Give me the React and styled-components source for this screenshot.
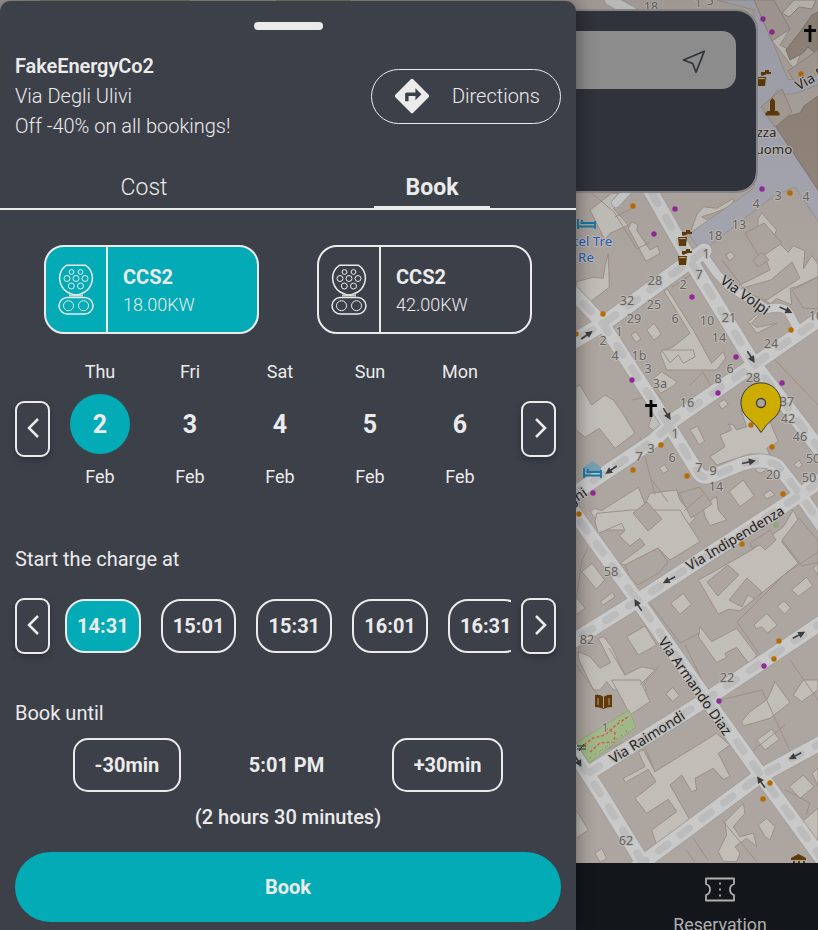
import React from 'react';
import styled, { createGlobalStyle } from 'styled-components';

const Global = createGlobalStyle`
  * { box-sizing: border-box; }
  html, body { margin: 0; padding: 0; overflow: hidden; background: #13171b; }
  button { font: inherit; color: inherit; background: none; border: 0; padding: 0; margin: 0; }
`;

const ink = '#ebebeb';
const teal = '#02abb5';

/* Every layer shares the single grid cell and is stacked in source order. */
const Page = styled.div`
  display: grid;
  grid-template: 930px / 818px;
  width: 818px;
  height: 930px;
  overflow: hidden;
  font-family: Roboto, 'Liberation Sans', sans-serif;
  color: ${ink};
  > * { grid-area: 1 / 1; }
`;

const MapCanvas = styled.svg`
  display: block;
  width: 818px;
  height: 863px;
`;

const SearchCard = styled.header`
  width: 696px;
  height: 184px;
  margin: 9px 0 0 62px;
  padding: 20px 20px;
  background: #30333b;
  background-clip: padding-box;
  border: 2px solid #858585;
  border-radius: 21px;
`;

const SearchField = styled.div`
  display: flex;
  align-items: center;
  justify-content: flex-end;
  height: 58px;
  padding-right: 30px;
  border-radius: 14px;
  background: #8c8c8c;
`;

const BottomNav = styled.nav`
  align-self: end;
  display: flex;
  justify-content: flex-end;
  height: 67px;
  background: #13171b;
`;

const NavItem = styled.div`
  display: flex;
  flex-direction: column;
  align-items: center;
  width: 196px;
  padding-top: 14px;
  font-size: 17.8px;
  line-height: 22px;
  color: #b0b0b0;
  white-space: nowrap;
  svg { margin-bottom: 12px; flex: none; }
`;

const Sheet = styled.main`
  display: flex;
  flex-direction: column;
  width: 576px;
  height: 929px;
  margin-top: 1px;
  background: #3c4049;
  border-radius: 10px 10px 0 0;
  box-shadow: 0 0 20px rgba(0, 0, 0, 0.45);
`;

const Handle = styled.div`
  flex: none;
  align-self: center;
  width: 69px;
  height: 8px;
  margin: 21px 0 0 1px;
  border-radius: 4px;
  background: ${ink};
`;

const Header = styled.section`
  display: flex;
  align-items: center;
  justify-content: space-between;
  height: 90px;
  margin-top: 21px;
  padding: 0 15px;
`;

const Station = styled.div`
  font-size: 20px;
  line-height: 30px;
  font-weight: 300;
`;

const StationName = styled.div`
  font-weight: 600;
  letter-spacing: -0.08px;
`;

const DirectionsButton = styled.button`
  display: flex;
  align-items: center;
  justify-content: space-between;
  width: 190px;
  height: 55px;
  padding: 0 20px 0 22px;
  border: 1px solid ${ink};
  border-radius: 28px;
  font-size: 20px;
  font-weight: 300;
`;

const Tabs = styled.div`
  display: grid;
  grid-template-columns: 1fr 1fr;
  justify-items: center;
  height: 43px;
  margin-top: 26px;
  border-bottom: 2px solid ${ink};
`;

const Tab = styled.button`
  width: 116px;
  height: 41px;
  padding-top: 3px;
  font-size: 23px;
  line-height: 36px;
  font-weight: ${(p) => (p.$active ? 700 : 300)};
  border-bottom: 2px solid ${(p) => (p.$active ? ink : 'transparent')};
`;

const Sockets = styled.div`
  display: flex;
  justify-content: space-around;
  padding: 0 15px;
  margin-top: 35px;
`;

const SocketCard = styled.button`
  display: flex;
  width: 215px;
  height: 89px;
  overflow: hidden;
  text-align: left;
  border: 2px solid ${ink};
  border-radius: 20px;
  background: ${(p) => (p.$active ? teal : 'transparent')};
`;

const SocketIcon = styled.span`
  display: flex;
  align-items: center;
  justify-content: center;
  width: 62px;
  height: 100%;
  border-right: 2px solid ${ink};
`;

const SocketText = styled.span`
  display: flex;
  flex-direction: column;
  padding: 16px 0 0 15px;
  font-size: 18px;
  line-height: 26px;
  font-weight: 300;
`;

const SocketName = styled.span`
  font-size: 20px;
  line-height: 29px;
  font-weight: 700;
`;

const Carousel = styled.div`
  display: grid;
  grid-template-columns: 35px 15px 446px 10px 35px;
  align-items: center;
  height: ${(p) => p.$height}px;
  margin: ${(p) => p.$top}px 20px 0 15px;
  > :nth-child(2) { grid-column: 3; }
  > :nth-child(3) { grid-column: 5; }
`;

const ArrowButton = styled.button`
  display: flex;
  align-items: center;
  justify-content: center;
  width: 35px;
  height: 56px;
  margin-top: ${(p) => p.$drop || 0}px;
  padding-bottom: 3px;
  padding-left: ${(p) => (p.$next ? 5 : 0)}px;
  border: 2px solid ${ink};
  border-radius: 9px;
  box-shadow: 0 3px 6px rgba(0, 0, 0, 0.25);
`;

const DayList = styled.div`
  display: flex;
  gap: 30px;
  padding-left: 5px;
  overflow: hidden;
`;

const Day = styled.div`
  flex: none;
  display: flex;
  flex-direction: column;
  align-items: center;
  width: 60px;
  font-size: 18px;
  line-height: 22px;
`;

const DayNumber = styled.div`
  display: flex;
  align-items: center;
  justify-content: center;
  width: 60px;
  height: 60px;
  margin: 11px 0 12px;
  padding-top: 1px;
  border-radius: 50%;
  font-size: 25px;
  font-weight: 700;
  background: ${(p) => (p.$active ? teal : 'transparent')};
`;

const TimeList = styled.div`
  display: flex;
  gap: 20px;
  overflow: hidden;
`;

const TimeButton = styled.button`
  flex: none;
  height: 54px;
  padding: 0 10.1px;
  font-size: 20px;
  font-weight: 700;
  border: 2px solid ${ink};
  border-radius: 20px;
  background: ${(p) => (p.$active ? teal : 'transparent')};
`;

const Label = styled.h2`
  margin: ${(p) => p.$top}px 15px 0;
  font-size: 20px;
  line-height: 24px;
  font-weight: 400;
`;

const UntilRow = styled.div`
  display: flex;
  align-items: center;
  justify-content: center;
  gap: 68px;
  height: 54px;
  margin-top: 13px;
  font-size: 20px;
  font-weight: 700;
`;

const StepButton = styled.button`
  height: 54px;
  padding: 0 19.5px;
  font-size: 20px;
  font-weight: 700;
  border: 2px solid ${ink};
  border-radius: 15px;
`;

const Duration = styled.div`
  margin-top: 13px;
  font-size: 20px;
  line-height: 24px;
  font-weight: 500;
  text-align: center;
`;

const BookButton = styled.button`
  flex: none;
  height: 70px;
  margin: 23px 15px 0;
  border-radius: 35px;
  background: ${teal};
  font-size: 20px;
  font-weight: 700;
`;

const Chevron = ({ next }) => (
  <svg width="12" height="20" viewBox="0 0 12 20" fill="none" stroke={ink} strokeWidth="2.5">
    <path d={next ? 'M1 1 10 10 1 19' : 'M11 1 2 10 11 19'} />
  </svg>
);

const DirectionsIcon = () => (
  <svg width="36" height="36" viewBox="1.5 1.5 21 21" fill={ink}>
    <path d="M21.71 11.29l-9-9a.996.996 0 0 0-1.41 0l-9 9a.996.996 0 0 0 0 1.41l9 9c.39.39 1.02.39 1.41 0l9-9a.996.996 0 0 0 0-1.41zM14 14.5V12h-4v3H8v-4c0-.55.45-1 1-1h5V7.5l3.5 3.5-3.5 3.5z" />
  </svg>
);

const Ccs2Icon = () => (
  <svg width="36" height="51" viewBox="0 0 36 51" fill="none" stroke={ink}>
    <path strokeWidth="1.5" d="M8.5 1.2h19l3 2.5a16.3 16.3 0 0 1-7.5 26q-5 2.500-10 0a16.300 16.300 0 0 1-7.500-26Z" />
    <path strokeWidth="1.8" strokeOpacity=".8" d="M11 31.5h14" />
    <rect x="1" y="33.5" width="34" height="16.5" rx="8.25" strokeWidth="1.5" />
    {[[13.5, 8], [22.5, 8], [9, 14.5], [18, 14.5], [27, 14.5], [13.3, 22], [22.5, 22]].map(([x, y], i) => (
      <circle key={i} cx={x} cy={y} r={i < 2 ? 2.4 : 3} strokeWidth="1" />
    ))}
    <circle cx="10.5" cy="41.7" r="5" strokeWidth="1" />
    <circle cx="25.5" cy="41.7" r="5" strokeWidth="1" />
  </svg>
);

const LocateIcon = () => (
  <svg width="24" height="28" viewBox="0 -2 24 28" fill="none" stroke="#30333b" strokeWidth="1.7" strokeLinejoin="round">
    <path d="M22.3 3.2 1.500 12l9.200 3.500 3.300 8.800Z" />
  </svg>
);

const TicketIcon = () => (
  <svg width="30" height="25" viewBox="0 0 30 25" fill="none" stroke="#b0b0b0" strokeWidth="1.8" strokeLinejoin="round">
    <path d="M1 1.5h28v5.500q-4 1.200-4 5.500t4 5.500v5.500H1V18q4-1.200 4-5.500T1 7Z" />
    <path d="M15 5.500v2m0 4v2m0 4v2" />
  </svg>
);

/* ---- Map data ---- */

const roads = [
  ['M640 170 650 190 690 260 752 361 820 450', 14],
  ['M560 349 603 324 704 251', 15],
  ['M565 284 603 324 668 424', 13],
  ['M668 424 699 474Q704 480 715 475L742 464Q764 457 778 466L799 493 830 537', 13],
  ['M668 424 752 366 830 312', 14],
  ['M668 427 653 441 560 503', 14],
  ['M565 500 637 600 705 697 760 774 830 870', 14],
  ['M560 649 637 601 797 497 830 474', 14],
  ['M590 772 704 701 830 617', 14],
  ['M565 739 600 793 646 868', 14],
  ['M637 867 760 776 830 738', 14],
  ['M702 253 717 274 731 288 767 309Q784 305 789 313L797 328', 8],
  ['M610 0 632 12', 10],
  ['M616 203 628 190', 8],
];

/* Open ground between buildings, grouped by map tile. */
const yards = [
  { at: 'translate(570 190) scale(.3333)', shapes: [
    'M60 60 125 10 180 10 130 55 175 105 120 130 105 150 90 120Z',
    'M115 190 118 292 55 340 20 300 20 275 70 262 100 265 105 230Z',
    'M175 115 185 95 205 105 200 120 240 180 262 168 270 190 228 214Z',
    'M380 75 400 50 440 55 490 25 490 45 430 70 395 80 420 95 395 110 360 130Z',
    'M565 85 575 68 620 120 610 142 655 187 670 167 705 182 700 237 725 197 744 222V260L680 290 660 295 665 345 620 325 575 365 545 400 560 412 620 400 560 430 535 395 600 340 500 290 600 240 560 140Z',
    'M468 195l15-10 12 15-18 12Z',
    'M183 435l15-10 15 22-15 10Z', 'M230 420l22-20 22 32-22 18Z',
    'M282 303 292 297 372 424 425 520 460 485 467 505 440 540H290L270 488 310 470 360 430Z',
  ] },
  { at: 'translate(570 350) scale(.3333)', shapes: [
    'M18 110 30 105 65 165 105 135 130 150 155 185 195 250 135 295 88 235 45 262 18 240Z',
    'M245 90 275 65 320 95 315 105 272 130Z', 'M235 230l15-45 35 45-30 15Z',
    'M275 0 370 0 375 20 340 40 325 15 300 38Z',
    'M360 240l22-12 22 45-17 12-15-27Z', 'M445 160l18-12 12 15-20 15Z',
    'M450 255 485 240 475 222 490 225 500 240 530 230 512 180 550 215 600 215 625 275 590 295 600 315 540 312 440 345 420 320 465 290Z',
    'M268 355l15-12 12 18-15 10Z',
    'M60 485 75 475 95 482 205 412 225 462 240 430 320 420 330 450 375 505 340 540H105Z',
    'M400 478 430 445 440 440 445 480 470 510 420 527 405 500Z', 'M478 425 520 390 553 438 510 470Z',
    'M580 435l20-15 15 15-25 12Z', 'M672 345l15-15 10 15-12 10Z', 'M555 360 570 345 590 360 570 370Z',
  ] },
  { at: 'translate(570 510) scale(.3333)', shapes: [
    'M75 35 80 10 185 0H330L345 25 390 95 300 150 265 115 165 165 150 160 225 105 210 85 180 108 148 78 165 62 155 40 85 70Z',
    'M36 185l30-25 38 50-25 28Z', 'M92 275l35-28 8 14-38 25Z',
    'M302 280l38-30 24 33-34 30Z',
    'M385 210 440 180 545 120 640 50 670 0 690 42 635 95 685 160 510 302 475 298 445 312Z',
    'M552 345 590 310 622 345 592 370 575 350 560 357Z', 'M622 290l20-18 20 22-18 18Z',
    'M665 240l45-38 18 25-42 32Z', 'M672 110l23-20 22 23-25 20Z',
    'M390 350 425 395 500 355 560 435 540 465 500 412 465 430 470 442 440 458 385 380Z',
    'M170 380 225 348 260 405 205 435Z',
    'M25 425 60 440 90 475 122 458 85 385 100 380 125 410 165 495 215 470 260 480 220 520 230 540H130L110 515 90 540H70L25 445Z',
    'M18 260 45 295 18 315Z', 'M730 175 744 160V195Z',
  ] },
  { at: 'translate(570 680) scale(.3333)', shapes: [
    'M125 0h85l30 65-60 40-20-40Z', 'M288 42l20-20 20 25-20 18Z',
    'M515 125 540 95 590 60 605 30 615 5 660 68 600 115 520 138Z',
    'M670 45 700 0H744V30L695 65Z', 'M560 180 605 148 628 178 585 210Z',
    'M255 275 440 160 480 195 445 220 480 290 460 298 430 265 375 295 380 330 365 335 335 285 300 315 340 385 365 430 270 525 245 450 320 395 295 358 230 400 195 355 258 305 235 268 165 308 160 295 225 260 205 215 220 210Z',
    'M465 425 520 370 525 400 490 440 510 470 550 460 560 500 530 475 495 500 510 520 500 545H460L445 515 470 465Z',
    'M565 435 590 415 615 440 600 480 585 470Z',
    'M658 320 700 285 732 320 690 355Z', 'M690 430l54-45v150Z', 'M727 280 744 265V320Z',
    'M75 520l20-15 15 30-20 12Z', 'M18 390 55 450 18 475Z',
  ] },
];

const masses = [
  'M633 513 647 502 662 519 648 531Z', 'M625 565 658 548 668 562 660 572 638 585 630 577Z',
  'M707 582 728 565 739 575 718 596Z', 'M729 600 747 578 762 592 755 599 748 595 742 607Z',
  'M750 543 770 530 776 540 765 550 760 545 752 548Z',
  'M745 233 764 223 782 243 760 258Z', 'M753 260 762 252 769 260 758 267Z',
  'M735 290 771 280 792 262 800 278 767 300Z', 'M792 290 818 277 818 309 803 308Z',
  'M679 493 700 487 712 504 691 518Z', 'M782 540 799 518 818 541V562L802 566Z',
];

const numbers = [
  [651, 11, '18'], [698, 7, '1'], [710, 5, '5'], [756, 208, '4'], [778, 200, '3'], [806, 201, '4'],
  [739, 229, '13'], [715, 240, '18'], [706, 258, '1'], [699, 279, '7'], [683, 289, '2'],
  [655, 285, '28'], [627, 305, '32'], [654, 309, '25'], [634, 323, '29'], [675, 323, '6'],
  [707, 325, '10'], [729, 322, '21'], [719, 342, '14'], [771, 348, '24'], [816, 320, '10'],
  [619, 336, '1'], [603, 345, '2'], [615, 360, '4'], [639, 360, '1b'],
  [660, 388, '3a'], [718, 383, '8'], [730, 373, '6'], [753, 382, '28'], [787, 406, '37'],
  [687, 407, '16'], [788, 423, '42'], [800, 441, '46'], [813, 463, '50'], [809, 482, '50'],
  [675, 438, '1'], [651, 453, '3'], [639, 461, '7'], [672, 462, '6'], [699, 472, '7'], [713, 475, '9'],
  [716, 491, '14'], [773, 479, '20'], [611, 576, '58'], [587, 644, '82'], [727, 682, '22'],
  [605, 732, '1'], [626, 845, '62'], [648, 373, '3'],
];

const dots = {
  '#b86b00': [
    [801, 74], [790, 193], [633, 206], [603, 314], [576, 334], [791, 330], [661, 445], [633, 470],
    [687, 476], [772, 447], [783, 494], [579, 514], [742, 544], [779, 641], [774, 659], [770, 783], [763, 799], [751, 425],
  ],
  '#922998': [
    [763, 19], [772, 32], [762, 189], [675, 209], [654, 234], [692, 297], [736, 357], [632, 380],
    [782, 383], [718, 393], [593, 493], [764, 666], [719, 701],
  ],
};

const arrows = [
  [587, 335, -35], [751, 357, 58], [786, 310, 25], [667, 414, 58], [611, 470, 145], [749, 462, -12],
  [669, 580, 152], [638, 605, -122], [799, 635, -28], [795, 756, 153], [761, 782, -125], [578, 761, 60],
];

const streets = [
  [745, 295, 36, 'Via Volpi', 14.2], [735, 538, -31, 'Via Indipendenza', 13.7],
  [695, 686, 55, 'Via Armando Diaz', 13.9], [647, 737, -32, 'Via Raimondi', 14],
  [823, 71, -30, 'Via Roma', 14], [562, 507, -35, 'Via Righi', 14],
];

const Tap = ({ x, y }) => (
  <g transform={`translate(${x} ${y})`} fill="#5e3b09">
    <path d="M1 7h9l-1 9H2ZM5 5V2h4V0h4v2h2v2h-4l-5 2Z" />
    <path d="M2.3 8.6h6.4" stroke="#c9b89c" />
  </g>
);

const Cross = ({ x, y }) => (
  <path d={`M${x} ${y - 8}v17M${x - 6} ${y - 2.5}h12`} stroke="#080808" strokeWidth="2.8" />
);

const Bed = ({ x, y }) => (
  <path d={`M${x} ${y}v10m0-2.5h17m0-5.5v8M${x + 2.5} ${y + 4}h14M${x + 3} ${y + 1.8}h2`} stroke="#1678a8" strokeWidth="1.8" fill="none" />
);

const CityMap = () => (
  <MapCanvas viewBox="0 0 818 863">
    <defs>
      <linearGradient id="topShade" x1="0" y1="0" x2="0" y2="1">
        <stop offset="0" stopColor="#000" stopOpacity=".08" />
        <stop offset="1" stopColor="#000" stopOpacity="0" />
      </linearGradient>
    </defs>
    <rect width="818" height="863" fill="#ada59f" />
    <path d="M40 0h150v3H40ZM276 0h75v3h-75Z" fill="#829369" />
    <g fill="#c1beb8" stroke="#9c9087" strokeWidth="3" strokeLinejoin="round">
      {yards.map((tile) => (
        <g key={tile.at} transform={tile.at}>{tile.shapes.map((d) => <path key={d} d={d} />)}</g>
      ))}
    </g>
    <g fill="#ada59f" stroke="#9c9087">
      {masses.map((d) => <path key={d} d={d} />)}
      <path fill="none" d="M588 190 614 212 637 249 650 242M615 217 635 207M627 360 665 402M672 287 691 275M722 260 745 290M775 360 818 405M737 622 786 573 818 552M737 622 760 655M650 603 680 643 700 633M685 645 707 690M576 600 582 560 588 548M640 685 660 665M609 648 625 675M576 665 605 705M605 750 640 735 655 772M790 660 818 700M720 700 762 690 790 751M745 757 785 725M785 790 810 803 806 815M693 838 708 860M722 820 757 862M686 850 695 862M640 437 655 495M652 480 668 502M684 511 705 493M655 395 632 400M690 385 703 372 715 393" />
    </g>
    <path d="M717 0h37l16 35 18 45 12-2 30-22v25l-34 12q-12 4-18-3l-15 18 17 23 40 60v33l-25-37-20 8-74 57-12-18 65-46V10Z" fill="#a7a7b2" stroke="#99948f" />
    <path d="M773 0 790 29 780 45 800 55 795 70 773 42 756 0Z" fill="#c1beb8" stroke="#9c9087" />
    <path d="M754 0h20l16 29-18 12Z" fill="#a99f98" stroke="#948981" />
    <path d="M782 13l12-13h22l-4 9-13-2-10 10Z" fill="#c1beb8" stroke="#948981" />
    <path d="M812 15 818 12V55l-10-8-5 6-13 7-4-10 14-18Z" fill="#94877d" stroke="#83776e" />
    <path d="M788 71 818 50V73l-20 14Z" fill="#a99f98" stroke="#948981" />
    <path d="M776 127 789 116 800 113 804 106 818 96V190Z" fill="#94877d" stroke="#83776e" />
    <path d="M761 107 782 89 792 112 775 127Z" fill="#a99f98" stroke="#948981" />
    <g fill="none" strokeLinecap="round" strokeLinejoin="round">
      {roads.map(([d, w]) => <path key={d} d={d} stroke="#a4a19e" strokeWidth={w + 2} />)}
      {roads.map(([d, w]) => <path key={d} d={d} stroke="#c9c9c9" strokeWidth={w} />)}
      {roads.filter(([, w]) => w > 12).map(([d]) => (
        <path key={d} d={d} stroke="#bcbcbc" strokeWidth="7.5" strokeDasharray="11 16" />
      ))}
    </g>
    <path d="M576 743 629 710 636 727 589 763Z" fill="#a0b787" stroke="#91a67b" />
    <path d="M584 745 593 738 605 735 616 725 629 716M590 752 600 743 612 742M605 728 615 733 614 743" fill="none" stroke="#d45b55" strokeWidth="1.5" strokeDasharray="3 2" />
    <path d="M602 750 629 730M619 720 627 732M590 758 610 744" stroke="#608247" strokeDasharray="1 5" />
    <circle cx="776" cy="525" r="3" fill="#91a681" />
    {Object.entries(dots).map(([fill, list]) => list.map(([x, y]) => (
      <circle key={`${x}-${y}`} cx={x} cy={y} r="2.7" fill={fill} />
    )))}
    {arrows.map(([x, y, a]) => (
      <g key={`${x}-${y}`} transform={`translate(${x} ${y}) rotate(${a})`}>
        <path d="M-7 0H3" stroke="#3d3d3d" strokeWidth="1.6" />
        <path d="M0-3.5 7 0 0 3.5Z" fill="#3d3d3d" />
      </g>
    ))}
    <g fontFamily="'Noto Sans', sans-serif" textAnchor="middle" stroke="#bdb9b5" strokeWidth="2" paintOrder="stroke" strokeLinejoin="round">
      <g fontSize="12.6" fill="#666462">
        {numbers.map(([x, y, t]) => <text key={`${x}-${y}`} x={x} y={y}>{t}</text>)}
      </g>
      <g fill="#252525">
        {streets.map(([x, y, a, t, s]) => (
          <text key={t} transform={`translate(${x} ${y}) rotate(${a})`} y="5" fontSize={s}>{t}</text>
        ))}
      </g>
      <g fontSize="13.3" fill="#292929">
        <text x="757" y="137">Piazza</text>
        <text x="769" y="154">Duomo</text>
      </g>
      <g fontSize="13.3" fill="#285cb5">
        <text x="584" y="246">Hotel Tre</text>
        <text x="586" y="262">Re</text>
      </g>
    </g>
    <Bed x={578} y={219} />
    <path d="M584 467 592.5 461l8.5 6v5h-17Z" fill="#779eb1" />
    <Bed x={584} y={468} />
    <Tap x={756} y={70} />
    <Tap x={677} y={230} />
    <Tap x={677} y={249} />
    <path d="M770 101l2.5-3 2.5 3v10h3v1.5h1.5v3h-14v-3h1.5V111h3Z" fill="#5e3b09" />
    <Cross x={810} y={33} />
    <Cross x={651} y={408} />
    <path d="M595 695q5-1 8.5 2 4-3 8.5-2v12q-5 0-8.5 2-4-2-8.5-2Z" fill="#5e3b09" />
    <path d="M598 698v7m11-7v7m-5.5-8v11" stroke="#b19f88" />
    <path d="M577 746h9m-9 3h9m-2-5-5 7" stroke="#333" fill="none" />
    <path d="M791 858 798.5 854l7.5 4v2h-15Zm2 3h2v2h-2Zm5 0h2v2h-2Zm5 0h2v2h-2Z" fill="#5e3b09" />
    <path d="M761 432.5Q757 425 748 418a20 20 0 1 1 26 0Q765 425 761 432.5Z" fill="#cdac00" stroke="#3b3b35" />
    <circle cx="761" cy="403" r="4.5" fill="#aba59e" stroke="#3b3b35" strokeWidth="1.3" />
    <rect width="818" height="300" fill="url(#topShade)" />
  </MapCanvas>
);

const days = [['Thu', 2], ['Fri', 3], ['Sat', 4], ['Sun', 5], ['Mon', 6]];
const times = ['14:31', '15:01', '15:31', '16:01', '16:31'];
const sockets = [['CCS2', '18.00KW'], ['CCS2', '42.00KW']];

export default function App() {
  return (
    <>
      <Global />
      <Page>
        <CityMap />
        <SearchCard>
          <SearchField><LocateIcon /></SearchField>
        </SearchCard>
        <BottomNav>
          <NavItem><TicketIcon />Reservation</NavItem>
        </BottomNav>
        <Sheet>
          <Handle />
          <Header>
            <Station>
              <StationName>FakeEnergyCo2</StationName>
              <div>Via Degli Ulivi</div>
              <div>Off -40% on all bookings!</div>
            </Station>
            <DirectionsButton><DirectionsIcon />Directions</DirectionsButton>
          </Header>
          <Tabs>
            <Tab>Cost</Tab>
            <Tab $active>Book</Tab>
          </Tabs>
          <Sockets>
            {sockets.map(([name, power], i) => (
              <SocketCard key={power} $active={i === 0}>
                <SocketIcon><Ccs2Icon /></SocketIcon>
                <SocketText><SocketName>{name}</SocketName>{power}</SocketText>
              </SocketCard>
            ))}
          </Sockets>
          <Carousel $height={127} $top={27}>
            <ArrowButton $drop={9}><Chevron /></ArrowButton>
            <DayList>
              {days.map(([day, n], i) => (
                <Day key={n}>{day}<DayNumber $active={i === 0}>{n}</DayNumber>Feb</Day>
              ))}
            </DayList>
            <ArrowButton $next $drop={9}><Chevron next /></ArrowButton>
          </Carousel>
          <Label $top={59}>Start the charge at</Label>
          <Carousel $height={56} $top={27}>
            <ArrowButton><Chevron /></ArrowButton>
            <TimeList>
              {times.map((t, i) => <TimeButton key={t} $active={i === 0}>{t}</TimeButton>)}
            </TimeList>
            <ArrowButton $next><Chevron next /></ArrowButton>
          </Carousel>
          <Label $top={47}>Book until</Label>
          <UntilRow>
            <StepButton>-30min</StepButton>
            <span>5:01 PM</span>
            <StepButton>+30min</StepButton>
          </UntilRow>
          <Duration>(2 hours 30 minutes)</Duration>
          <BookButton>Book</BookButton>
        </Sheet>
      </Page>
    </>
  );
}
